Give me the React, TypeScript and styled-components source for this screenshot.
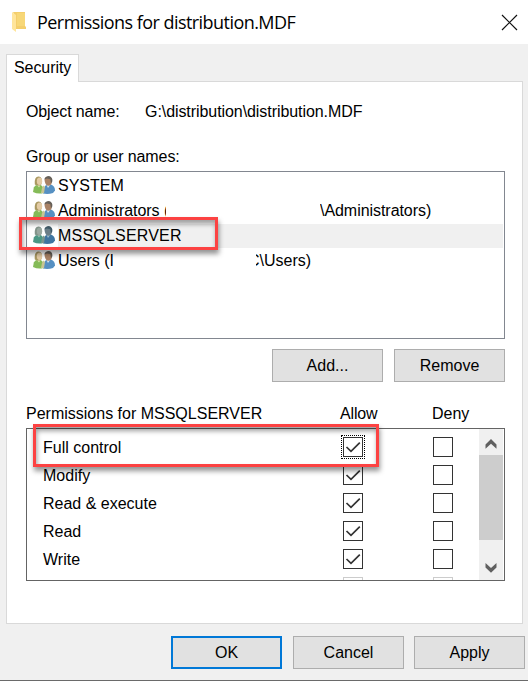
import React from "react";
import styled, { createGlobalStyle } from "styled-components";

const GlobalStyle = createGlobalStyle`
  * { box-sizing: border-box; }
  body {
    margin: 0;
    background: #fff;
    overflow: hidden;
    color: #000;
    font: 16px/20px "Liberation Sans", Arial, sans-serif;
  }
`;

const Dialog = styled.main`
  width: 528px;
  height: 681px;
  background: #f0f0f0;
  border-bottom: 1px solid #6a6a6a;
`;

const TitleBar = styled.header`
  display: flex;
  align-items: center;
  height: 44px;
  padding: 0 10px 0 11px;
  background: #fff;
`;

const Title = styled.h1`
  flex: 1;
  margin: 0 0 1px 11px;
  font: 400 18px/26px "Open Sans", "Noto Sans", sans-serif;
  letter-spacing: -0.55px;
  white-space: nowrap;
`;

const TabStrip = styled.nav`
  display: flex;
  padding: 10px 0 0 6px;
  height: 37px;
`;

const Tab = styled.div`
  position: relative;
  z-index: 1;
  width: 73px;
  height: 28px;
  padding: 3px 0 0 7px;
  background: #fff;
  border: 1px solid #d9d9d9;
  border-bottom: 0;
  letter-spacing: -0.07px;
`;

const Panel = styled.section`
  width: 517px;
  height: 543px;
  margin-left: 6px;
  padding: 20px 18px 0 19px;
  background: #fff;
  border: 1px solid #d9d9d9;
`;

const Text = styled.span<{ $w?: number; $track?: number }>`
  display: block;
  flex: none;
  width: ${(p) => (p.$w ? `${p.$w}px` : "auto")};
  letter-spacing: ${(p) => p.$track ?? 0}px;
  white-space: pre;
`;

const Line = styled.div`
  display: flex;
  height: 20px;
`;

const GroupLabel = styled.div`
  margin-top: 25px;
  height: 24px;
  letter-spacing: -0.1px;
`;

const UserList = styled.div`
  position: relative;
  width: 479px;
  height: 168px;
  padding: 2px 1px 0 6px;
  border: 1px solid #828790;
`;

const UserRow = styled.div`
  display: flex;
  height: 25px;
  svg { margin-top: 2px; }
`;

const UserName = styled.div<{ $selected?: boolean; $track?: number }>`
  display: flex;
  flex: 1;
  height: 24px;
  margin-left: 3px;
  padding-top: 2px;
  letter-spacing: ${(p) => p.$track ?? 0}px;
  background: ${(p) => (p.$selected ? "#f0f0f0" : "transparent")};
`;

const Clip = styled.span<{ $w: number; $gap?: number; $shift?: number }>`
  display: block;
  width: ${(p) => p.$w}px;
  margin-left: ${(p) => p.$gap ?? 0}px;
  text-indent: ${(p) => p.$shift ?? 0}px;
  overflow: hidden;
  white-space: nowrap;
`;

const Highlight = styled.div<{ $x: number; $y: number; $w: number; $h: number }>`
  position: absolute;
  left: ${(p) => p.$x}px;
  top: ${(p) => p.$y}px;
  width: ${(p) => p.$w}px;
  height: ${(p) => p.$h}px;
  border: 3px solid #fc4242;
  box-shadow: 1px 4px 5px rgba(0, 0, 0, 0.42), inset 1px 4px 5px rgba(0, 0, 0, 0.38);
`;

const Button = styled.button<{ $primary?: boolean }>`
  width: 111px;
  height: 33px;
  padding: 0;
  color: #000;
  font: inherit;
  background: #e1e1e1;
  border: ${(p) => (p.$primary ? "2px solid #0078d7" : "1px solid #adadad")};
  border-radius: 0;
`;

const ListButtons = styled.div`
  display: flex;
  justify-content: flex-end;
  gap: 11px;
  width: 479px;
  margin-top: 10px;
`;

const PermissionHead = styled.div`
  display: flex;
  height: 24px;
  margin-top: 22px;
`;

const PermissionBox = styled.div`
  position: relative;
  display: flex;
  width: 479px;
  height: 153px;
  border: 1px solid #646464;
`;

const PermissionRows = styled.div`
  flex: 1;
  padding: 4px 0 0 16px;
  overflow: hidden;
`;

const PermissionRow = styled.div`
  display: grid;
  grid-template-columns: 300px 90px 20px;
  align-items: center;
  height: 28px;
`;

const PermissionName = styled.span`
  padding-top: 2px;
`;

const CheckBox = styled.span<{ $focus?: boolean; $dim?: boolean }>`
  display: block;
  width: 20px;
  height: 20px;
  border: 1px solid ${(p) => (p.$dim ? "#ccc" : "#333")};
  outline: ${(p) => (p.$focus ? "1px dotted #000" : "none")};
  outline-offset: 1px;
  svg { display: block; }
`;

const ScrollBar = styled.div`
  display: flex;
  flex-direction: column;
  justify-content: space-between;
  width: 24px;
  margin-right: 1px;
  background: #f0f0f0;
`;

const Thumb = styled.div`
  flex: 1;
  background: #cdcdcd;
`;

const ArrowButton = styled.div<{ $h: number; $pad: number }>`
  height: ${(p) => p.$h}px;
  padding: ${(p) => p.$pad}px 0 0 6px;
  svg { display: block; }
`;

const Footer = styled.footer`
  display: flex;
  justify-content: flex-end;
  gap: 10px;
  width: 525px;
  padding-top: 12px;

  ${Button}:first-child { margin-right: 1px; }
`;

const FolderIcon = () => (
  <svg width="15" height="20" viewBox="0 0 15 20">
    <path d="M2 0H14V14L15 15V17H3V2Z" fill="#f4ce6b" />
    <path d="M6 1h8v13H6z" fill="#f7d777" />
    <path d="M1 0 5 3V20L1 17Z" fill="#ffe59b" />
  </svg>
);

const CloseIcon = () => (
  <svg width="17" height="17" viewBox="0 0 17 17" stroke="#111" strokeWidth="1.2">
    <path d="M1 1 16 16M16 1 1 16" />
  </svg>
);

const UsersIcon = ({ selected = false }: { selected?: boolean }) => (
  <svg width="22" height="18" viewBox="0 0 22 18">
    <path d="M10 17.5 11 12Q12 9 14 8.5H18Q22 10 22 14.5L20 17Q15 18.5 10 17.5Z" fill={selected ? "#3f75a0" : "#5690c2"} />
    <path d="M13.5 9 15 12 17.5 8.5Z" fill={selected ? "#9bbccc" : "#d7e7ef"} />
    <path d="M11.5 4Q12 1 15 1Q19 1 19 5Q19 9.8 15 9.8Q12 9 11.5 4Z" fill={selected ? "#6a7e88" : "#a98265"} />
    <path d="M11.3 3.5Q12 0 16 0Q20 1 19.3 5.5L18 7.2 17.3 3.2 14 2.4Z" fill={selected ? "#415b68" : "#666059"} />
    <path d="M0 16 .8 11.5Q2 9 5 8.7H7.5Q10 10 10.5 13V17Q5 18.5 0 16Z" fill={selected ? "#4b9885" : "#85bb58"} />
    <path d="M4 9 6 11.5 7.7 8.7Z" fill={selected ? "#9bc6b5" : "#d9e8ad"} />
    <path d="M1.8 8.5Q1 0 6 .4Q10 1 8.5 8L7.5 9.5H4Z" fill={selected ? "#83948a" : "#aa9860"} />
    <ellipse cx="6.5" cy="5.2" rx="2.7" ry="3.7" fill={selected ? "#9ba9a1" : "#e3cba5"} />
    <path d="M8 17 9 12 10.5 9.5 12 11 11 17Z" fill={selected ? "#78968d" : "#c8c594"} />
  </svg>
);

const CheckMark = () => (
  <svg width="18" height="18" viewBox="0 0 18 18" fill="none" stroke="#333" strokeWidth="1.7">
    <path d="M2.5 9 7 13.4 15.8 4.6" />
  </svg>
);

const Arrow = ({ down = false }: { down?: boolean }) => (
  <svg width="12" height="10" viewBox="0 0 12 10" fill="#606060">
    <path d={down ? "M.5 0 6 5 11.5 0V4.4L6 9.8.5 4.4Z" : "M.5 9.8 6 4.8 11.5 9.8V5.4L6 0 .5 5.4Z"} />
  </svg>
);

const permissions = ["Full control", "Modify", "Read & execute", "Read", "Write"];

export default function App() {
  return (
    <>
      <GlobalStyle />
      <Dialog>
        <TitleBar>
          <FolderIcon />
          <Title>Permissions for distribution.MDF</Title>
          <CloseIcon />
        </TitleBar>
        <TabStrip>
          <Tab>Security</Tab>
        </TabStrip>
        <Panel>
          <Line>
            <Text $w={119} $track={-0.13}>Object name:</Text>
            <Text $track={-0.07}>G:\distribution\distribution.MDF</Text>
          </Line>
          <GroupLabel>Group or user names:</GroupLabel>
          <UserList>
            <UserRow>
              <UsersIcon />
              <UserName>SYSTEM</UserName>
            </UserRow>
            <UserRow>
              <UsersIcon />
              <UserName $track={-0.05}>
                <Clip $w={108}>Administrators (</Clip>
                <Clip $w={130} $gap={154}>{"\\Administrators)"}</Clip>
              </UserName>
            </UserRow>
            <UserRow>
              <UsersIcon selected />
              <UserName $selected $track={0.2}>MSSQLSERVER</UserName>
            </UserRow>
            <UserRow>
              <UsersIcon />
              <UserName>
                <Clip $w={55}>Users (I</Clip>
                <Clip $w={70} $gap={143} $shift={-8}>{"C\\Users)"}</Clip>
              </UserName>
            </UserRow>
            <Highlight $x={-8} $y={45} $w={199} $h={33} />
          </UserList>
          <ListButtons>
            <Button>Add...</Button>
            <Button>Remove</Button>
          </ListButtons>
          <PermissionHead>
            <Text $w={314}>Permissions for MSSQLSERVER</Text>
            <Text $w={92} $track={-0.15}>Allow</Text>
            <Text>Deny</Text>
          </PermissionHead>
          <PermissionBox>
            <PermissionRows>
              {permissions.map((name, i) => (
                <PermissionRow key={name}>
                  <PermissionName>{name}</PermissionName>
                  <CheckBox $focus={i === 0}><CheckMark /></CheckBox>
                  <CheckBox />
                </PermissionRow>
              ))}
              <PermissionRow>
                <span />
                <CheckBox $dim />
                <CheckBox $dim />
              </PermissionRow>
            </PermissionRows>
            <ScrollBar>
              <ArrowButton $h={26} $pad={10}><Arrow /></ArrowButton>
              <Thumb />
              <ArrowButton $h={40} $pad={23}><Arrow down /></ArrowButton>
            </ScrollBar>
            <Highlight $x={6} $y={-5} $w={346} $h={43} />
          </PermissionBox>
        </Panel>
        <Footer>
          <Button $primary>OK</Button>
          <Button>Cancel</Button>
          <Button>Apply</Button>
        </Footer>
      </Dialog>
    </>
  );
}
